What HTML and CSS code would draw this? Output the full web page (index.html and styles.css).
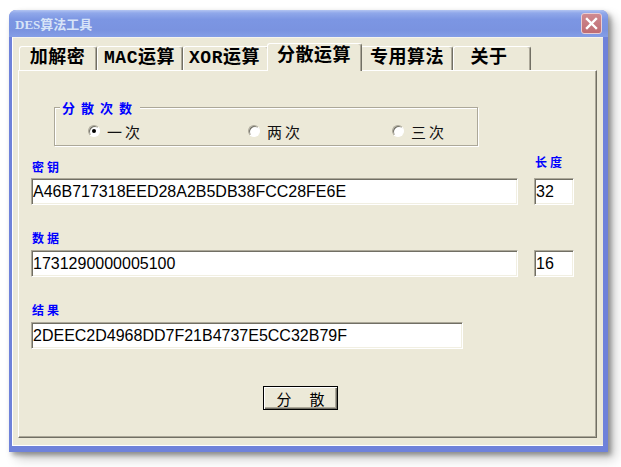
FILE: index.html
```html
<!DOCTYPE html>
<html lang="zh-CN">
<head>
<meta charset="utf-8">
<title>DES算法工具</title>
<link rel="stylesheet" href="styles.css">
</head>
<body>
<div class="window">
  <div class="titlebar">
    <span class="title">DES算法工具</span>
    <div class="close">
      <svg width="13" height="13" viewBox="0 0 13 13"><path d="M2 2 L11 11 M11 2 L2 11" stroke="#fff" stroke-width="2.4" stroke-linecap="square"/></svg>
    </div>
  </div>
  <div class="client">
    <div class="tabctrl">
      <div class="tabs">
        <div class="tab w1">加解密</div>
        <div class="tab w2">MAC运算</div>
        <div class="tab w3">XOR运算</div>
        <div class="tab sel w4">分散运算</div>
        <div class="tab w5">专用算法</div>
        <div class="tab w6">关于</div>
      </div>
      <div class="panel">
        <div class="group">
          <span class="legend">分散次数</span>
          <div class="opts">
            <div class="opt o1"><span class="radio on"></span><span class="otext">一次</span></div>
            <div class="opt o2"><span class="radio"></span><span class="otext">两次</span></div>
            <div class="opt"><span class="radio"></span><span class="otext">三次</span></div>
          </div>
        </div>
        <div class="fields">
          <div class="lbl first">密钥</div>
          <div class="lbl len">长度</div>
          <input class="edit" value="A46B717318EED28A2B5DB38FCC28FE6E" readonly>
          <input class="edit" value="32" readonly>
          <div class="lbl next">数据</div>
          <div></div>
          <input class="edit" value="1731290000005100" readonly>
          <input class="edit" value="16" readonly>
          <div class="lbl next">结果</div>
          <div></div>
          <input class="edit result" value="2DEEC2D4968DD7F21B4737E5CC32B79F" readonly>
        </div>
        <div class="btn"><span>分</span><span>散</span></div>
      </div>
    </div>
  </div>
</div>
</body>
</html>
```
FILE: styles.css
```css
* { box-sizing: border-box; }
html, body { margin: 0; padding: 0; background: #fff; }
body {
  width: 621px;
  height: 467px;
  overflow: hidden;
  font-family: "Noto Sans CJK SC", sans-serif;
}
.window {
  margin: 10px 0 0 9px;
  width: 599px;
  height: 442px;
  background: #6f82da;
  border-radius: 7px 7px 0 0;
  padding: 0 5px 6px 3px;
  box-shadow: 3px 3px 5px rgba(0,0,0,.35), 7px 7px 12px rgba(0,0,0,.2);
  display: flex;
  flex-direction: column;
}
.titlebar {
  height: 27px;
  margin: 0 -5px 0 -3px;
  border-radius: 7px 7px 0 0;
  background: linear-gradient(#b4c5f2, #90a8ea 3px, #7c96e3 35%, #7a93e0 75%, #849ee6);
  display: flex;
  align-items: center;
  padding: 0 6px 0 6px;
}
.title {
  flex: 1;
  color: #d8e4f8;
  font: bold 13px "Liberation Serif", "Noto Sans CJK SC", serif;
}
.close {
  width: 21px;
  height: 21px;
  border: 1px solid #e8cdd3;
  border-radius: 3px;
  background: linear-gradient(#cf8a90, #bf6c73);
  display: flex;
  align-items: center;
  justify-content: center;
}
.close svg { display: block; }
.client {
  flex: 1;
  background: #ece9d8;
  border-left: 1px solid #fff;
  border-top: 1px solid #f6f4ec;
  border-bottom: 1px solid #fff;
}
.tabctrl {
  margin: 5px 0 0 5px;
  width: 579px;
}
.tabs {
  display: flex;
  align-items: flex-end;
  height: 27px;
  padding-left: 1px;
}
.tab {
  height: 24px;
  background: #ece9d8;
  border-top: 1px solid #fff;
  border-left: 1px solid #fff;
  border-right: 1px solid #716f64;
  box-shadow: inset -1px 0 0 #aca899;
  border-radius: 3px 3px 0 0;
  font: bold 18px/23px "Liberation Mono", "Noto Sans CJK SC", monospace;
  letter-spacing: 0.5px;
  text-align: center;
  color: #000;
  padding-right: 1px;
}
.w1 { width: 78px; }
.w2 { width: 86px; }
.w3 { width: 86px; padding-right: 3px; }
.w4 { width: 95px; }
.w5 { width: 93px; padding-left: 2px; }
.w6 { width: 78px; padding-right: 6px; }
.tab.sel {
  height: 28px;
  margin: 0 -2px -1px -2px;
  position: relative;
  z-index: 1;
  line-height: 25px;
}
.panel {
  height: 368px;
  border-top: 1px solid #fff;
  border-left: 1px solid #fff;
  border-right: 1px solid #716f64;
  border-bottom: 1px solid #716f64;
  box-shadow: inset -1px -1px 0 #aca899;
  background: #ece9d8;
}
.group {
  position: relative;
  margin: 36px 0 0 35px;
  width: 424px;
  height: 39px;
  border: 1px solid #aca899;
  box-shadow: inset 1px 1px 0 #fff, 1px 1px 0 #fff;
  padding: 17px 0 0 33px;
}
.legend {
  position: absolute;
  top: -7px;
  left: 5px;
  padding: 0 2px;
  background: #ece9d8;
  color: #0000ff;
  font: bold 13px/13px "Noto Sans CJK SC", sans-serif;
  letter-spacing: 6px;
}
.opts { display: flex; align-items: center; height: 12px; }
.opt { display: flex; align-items: center; gap: 7px; }
.o1 { width: 160px; }
.o2 { width: 144px; }
.radio {
  width: 12px;
  height: 12px;
  border-radius: 50%;
  border: 1px solid;
  border-color: #aca899 #fff #fff #aca899;
  background: #fff;
  box-shadow: inset 1px 1px 0 #716f64;
  display: flex;
  align-items: center;
  justify-content: center;
}
.radio.on::after {
  content: "";
  width: 4px;
  height: 4px;
  border-radius: 50%;
  background: #000;
}
.otext {
  font: 15px/15px "Noto Sans CJK SC", sans-serif;
  letter-spacing: 3px;
  color: #111;
}
.fields {
  display: grid;
  grid-template-columns: 487px 40px;
  column-gap: 16px;
  margin: 10px 0 0 12px;
}
.lbl {
  color: #0000ff;
  font: bold 12px/12px "Noto Sans CJK SC", sans-serif;
  letter-spacing: 3px;
  padding-left: 1px;
}
.lbl.first { align-self: end; margin-bottom: 5px; }
.lbl.len { align-self: end; margin-bottom: 10px; }
.lbl.next { margin: 27px 0 6px; }
.edit {
  display: block;
  width: 100%;
  height: 27px;
  margin: 0;
  padding: 0 1px;
  border: 1px solid;
  border-color: #aca899 #fff #fff #aca899;
  box-shadow: inset 1px 1px 0 #716f64, inset -1px -1px 0 #f1efe2;
  background: #fff;
  color: #000;
  font: 16px "Liberation Sans", Arial, sans-serif;
  outline: none;
}
.edit.result { width: 432px; }
.btn {
  margin: 37px 0 0 244px;
  width: 75px;
  height: 24px;
  border: 1px solid #000;
  background: #ece9d8;
  box-shadow: inset 1px 1px 0 #fff, inset -1px -1px 0 #716f64, inset -2px -2px 0 #aca899;
  display: flex;
  align-items: center;
  justify-content: center;
  gap: 18px;
  font: 15px/15px "Noto Sans CJK SC", sans-serif;
  color: #000;
}
```
